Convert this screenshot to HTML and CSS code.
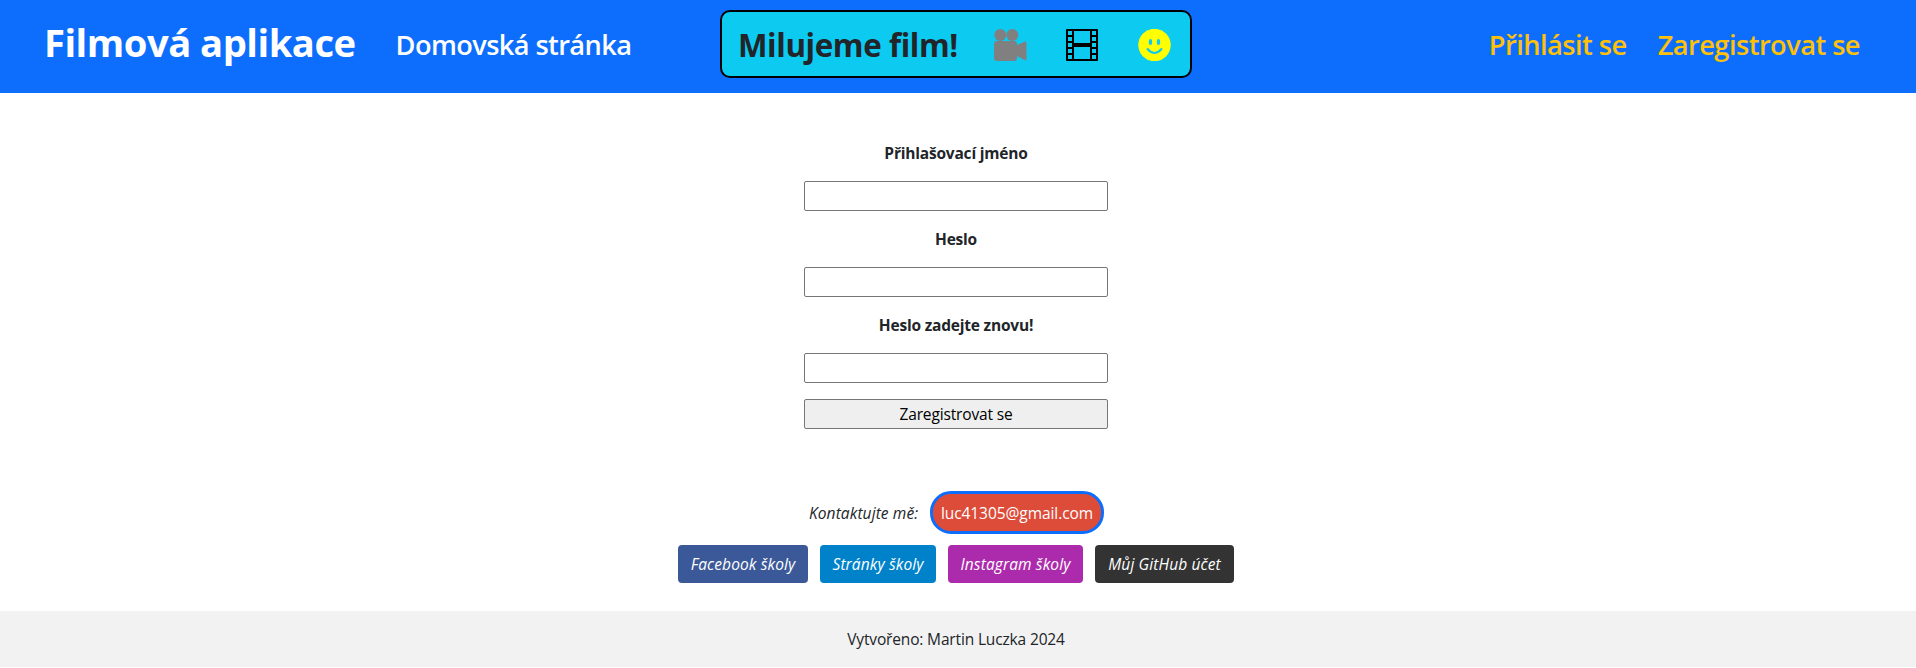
FILE: index.html
```html
<!DOCTYPE html>
<html lang="cs">
<head>
<meta charset="utf-8">
<title>Filmová aplikace</title>
<link rel="stylesheet" href="styles.css">
</head>
<body>
<header class="navbar">
  <nav class="nav-left">
    <a class="brand">Filmová aplikace</a>
    <a class="nav-link">Domovská stránka</a>
  </nav>
  <div class="banner">
    <span class="banner-text">Milujeme film!</span>
    <svg class="icon" viewBox="0 0 33 32" width="33" height="32"><g fill="#808080"><circle cx="6.3" cy="6" r="6"/><circle cx="18.3" cy="6" r="6"/><path d="M3 12H20a3 3 0 0 1 3 3v1l7.500-3.300Q32.500 12.200 32.500 13.500V30.500Q32.500 31.700 31 31.300L23 27v2a3 3 0 0 1-3 3H3a3 3 0 0 1-3-3V15a3 3 0 0 1 3-3z"/></g></svg>
    <svg class="icon" viewBox="0 0 32 32" width="32" height="32"><path d="M1 1H31V31H1zM7 1V31M25 1V31M1 7H7M1 13H7M1 19H7M1 25H7M25 7H31M25 13H31M25 19H31M25 25H31" fill="none" stroke="#000" stroke-width="2" stroke-linejoin="round"/><path d="M7 14H25V18H7z"/></svg>
    <svg class="icon" viewBox="0 0 33 32" width="33" height="32"><circle cx="16.500" cy="16" r="16.200" fill="#ff0"/><g fill="#0dcaf0"><ellipse cx="12.500" cy="13" rx="1.700" ry="3"/><ellipse cx="20.500" cy="13" rx="1.700" ry="3"/></g><path d="M9.500 20Q16.500 28 23.500 20" fill="none" stroke="#0dcaf0" stroke-width="2" stroke-linecap="round"/></svg>
  </div>
  <nav class="nav-right">
    <a class="nav-link accent">Přihlásit se</a>
    <a class="nav-link accent">Zaregistrovat se</a>
  </nav>
</header>
<main>
  <form class="form">
    <label for="name">Přihlašovací jméno</label>
    <input id="name" type="text">
    <label for="pass">Heslo</label>
    <input id="pass" type="password">
    <label for="again">Heslo zadejte znovu!</label>
    <input id="again" type="password">
    <button type="button">Zaregistrovat se</button>
  </form>
</main>
<footer>
  <div class="contact"><em class="contact-label">Kontaktujte mě:</em><a class="mail">luc41305@gmail.com</a></div>
  <div class="links">
    <a class="link facebook">Facebook školy</a>
    <a class="link school">Stránky školy</a>
    <a class="link instagram">Instagram školy</a>
    <a class="link github">Můj GitHub účet</a>
  </div>
  <div class="copyright">Vytvořeno: Martin Luczka 2024</div>
</footer>
</body>
</html>
```
FILE: styles.css
```css
* { box-sizing: border-box; }
body {
  margin: 0;
  background: #fff;
  color: #212529;
  font: 15.5px/24px "Open Sans", "Noto Sans", sans-serif;
}
a, span, label, em { white-space: nowrap; }
.navbar {
  display: grid;
  grid-template-columns: 1fr 472px 1fr;
  height: 93px;
  padding: 10px 48px 0 44px;
  background: #0d6efd;
}
.nav-left, .nav-right { display: flex; align-items: flex-start; }
.nav-left { gap: 40px; }
.nav-right { justify-content: flex-end; gap: 31px; padding-right: 8px; }
.brand { color: #fff; font-size: 38.2px; font-weight: 700; letter-spacing: -0.5px; line-height: 64px; }
.nav-link { color: #fff; font-size: 27.2px; font-weight: 600; letter-spacing: -0.6px; line-height: 70px; }
.accent { color: #ffc107; letter-spacing: -0.53px; }
.banner {
  display: flex;
  align-items: center;
  height: 68px;
  padding: 0 16px;
  border: 2px solid #000;
  border-radius: 10px;
  background: #0dcaf0;
}
.banner-text { width: 220px; padding-top: 2px; font-size: 31.3px; font-weight: 700; letter-spacing: -0.4px; }
.icon { flex: none; margin: 2px 0 0 39px; }
.icon:last-child { margin-left: 40px; }
.banner-text + .icon { margin-left: 36px; }
main { height: 398px; padding: 32px 4px 0 0; }
.form { display: flex; flex-direction: column; width: 304px; margin: 0 auto; }
label { height: 24px; margin: 16px 0; font-weight: 700; letter-spacing: -0.2px; text-align: center; }
input, button { width: 304px; height: 30px; border: 1px solid #767676; border-radius: 2px; background: #fff; }
button { margin-top: 16px; padding: 0; background: #efefef; color: #000; font: inherit; letter-spacing: -0.15px; line-height: 28px; }
.contact, .links, .copyright { padding-right: 4px; }
.contact { display: flex; align-items: center; justify-content: center; gap: 12px; height: 43px; }
.contact-label { width: 110px; padding: 1px 0 0 1px; letter-spacing: 0.1px; }
.mail { width: 174px; height: 43px; border: 3px solid #0d6efd; border-radius: 21px; background: #dd4b39; color: #fff; letter-spacing: -0.07px; line-height: 39px; text-align: center; }
.links { display: flex; justify-content: center; gap: 12px; margin-top: 11px; }
.link { height: 38px; border-radius: 4px; color: #fff; font-style: italic; font-weight: 500; letter-spacing: 0.12px; line-height: 38px; text-align: center; }
.facebook { width: 130px; background: #3b5998; }
.school { width: 116px; background: #0082ca; }
.instagram { width: 135px; background: #ac2bac; }
.github { width: 139px; background: #333; }
.copyright { height: 56px; margin-top: 28px; background: #f2f2f2; letter-spacing: -0.15px; line-height: 57px; text-align: center; }
```
